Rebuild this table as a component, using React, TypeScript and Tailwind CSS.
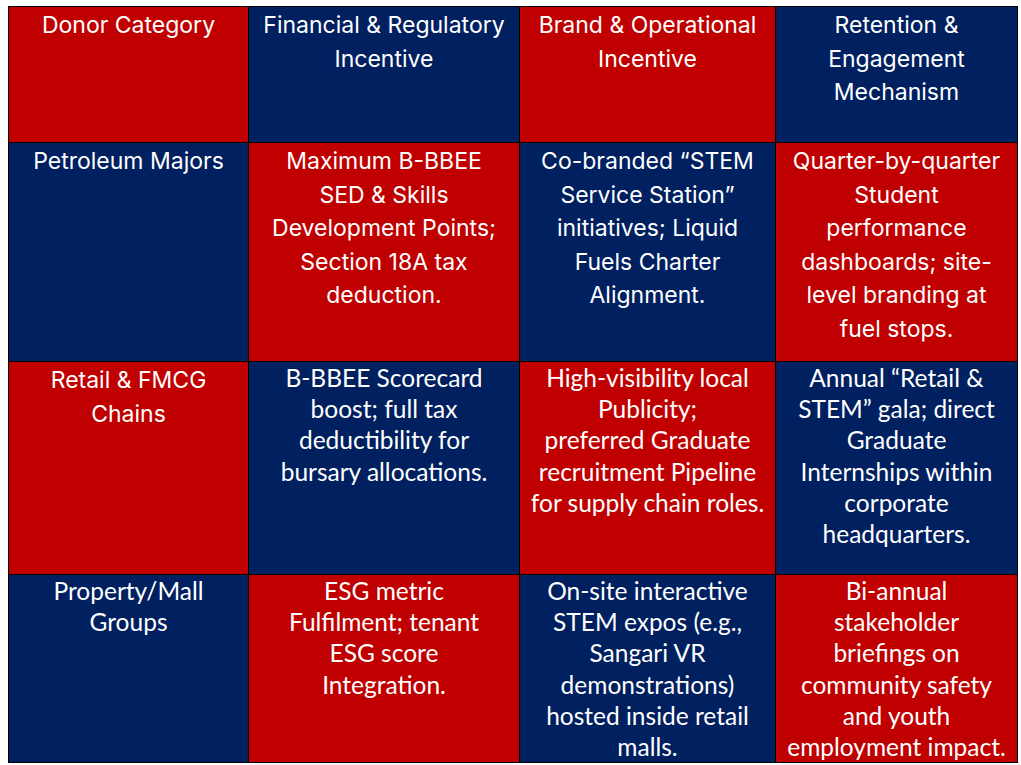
import React from 'react';

type Cell = {
    lines: string[];
    calibri?: boolean;
};

const RED = 'bg-[#c00000]';
const NAVY = 'bg-[#002060]';

const rows: Cell[][] = [
    [
        { lines: ['Donor Category'] },
        { lines: ['Financial & Regulatory', 'Incentive'] },
        { lines: ['Brand & Operational', 'Incentive'] },
        { lines: ['Retention &', 'Engagement', 'Mechanism'] },
    ],
    [
        { lines: ['Petroleum Majors'] },
        { lines: ['Maximum B-BBEE', 'SED & Skills', 'Development Points;', 'Section 18A tax', 'deduction.'] },
        { lines: ['Co-branded \u201cSTEM', 'Service Station\u201d', 'initiatives; Liquid', 'Fuels Charter', 'Alignment.'] },
        { lines: ['Quarter-by-quarter', 'Student', 'performance', 'dashboards; site-', 'level branding at', 'fuel stops.'] },
    ],
    [
        { lines: ['Retail & FMCG', 'Chains'] },
        { lines: ['B-BBEE Scorecard', 'boost; full tax', 'deductibility for', 'bursary allocations.'], calibri: true },
        { lines: ['High-visibility local', 'Publicity;', 'preferred Graduate', 'recruitment Pipeline', 'for supply chain roles.'], calibri: true },
        { lines: ['Annual \u201cRetail &', 'STEM\u201d gala; direct', 'Graduate', 'Internships within', 'corporate', 'headquarters.'], calibri: true },
    ],
    [
        { lines: ['Property/Mall', 'Groups'], calibri: true },
        { lines: ['ESG metric', 'Fulfilment; tenant', 'ESG score', 'Integration.'], calibri: true },
        { lines: ['On-site interactive', 'STEM expos (e.g.,', 'Sangari VR', 'demonstrations)', 'hosted inside retail', 'malls.'], calibri: true },
        { lines: ['Bi-annual', 'stakeholder', 'briefings on', 'community safety', 'and youth', 'employment impact.'], calibri: true },
    ],
];

const App: React.FC = () => {
    return (
        <div className="w-[1021px] h-[765px] bg-white pl-[8px] pt-[6px]">
            <div className="grid w-[1010px] grid-cols-[239px_270px_255px_241px] grid-rows-[135px_218px_212px_187px] gap-px bg-black p-px">
                {rows.map((row, r) =>
                    row.map((cell, c) => (
                        <div
                            key={`${r}-${c}`}
                            className={`${(r + c) % 2 === 0 ? RED : NAVY} flex flex-col items-center text-center text-white ${
                                cell.calibri
                                    ? "font-['Lato','Open_Sans',sans-serif] text-[24.5px] leading-[31.2px]"
                                    : "font-['Inter','Noto_Sans',sans-serif] text-[23px] leading-[33.5px] pt-[2px]"
                            }`}
                        >
                            {cell.lines.map((line, i) => (
                                <span key={i} className="whitespace-nowrap">{line}</span>
                            ))}
                        </div>
                    ))
                )}
            </div>
        </div>
    );
};

export default App;
